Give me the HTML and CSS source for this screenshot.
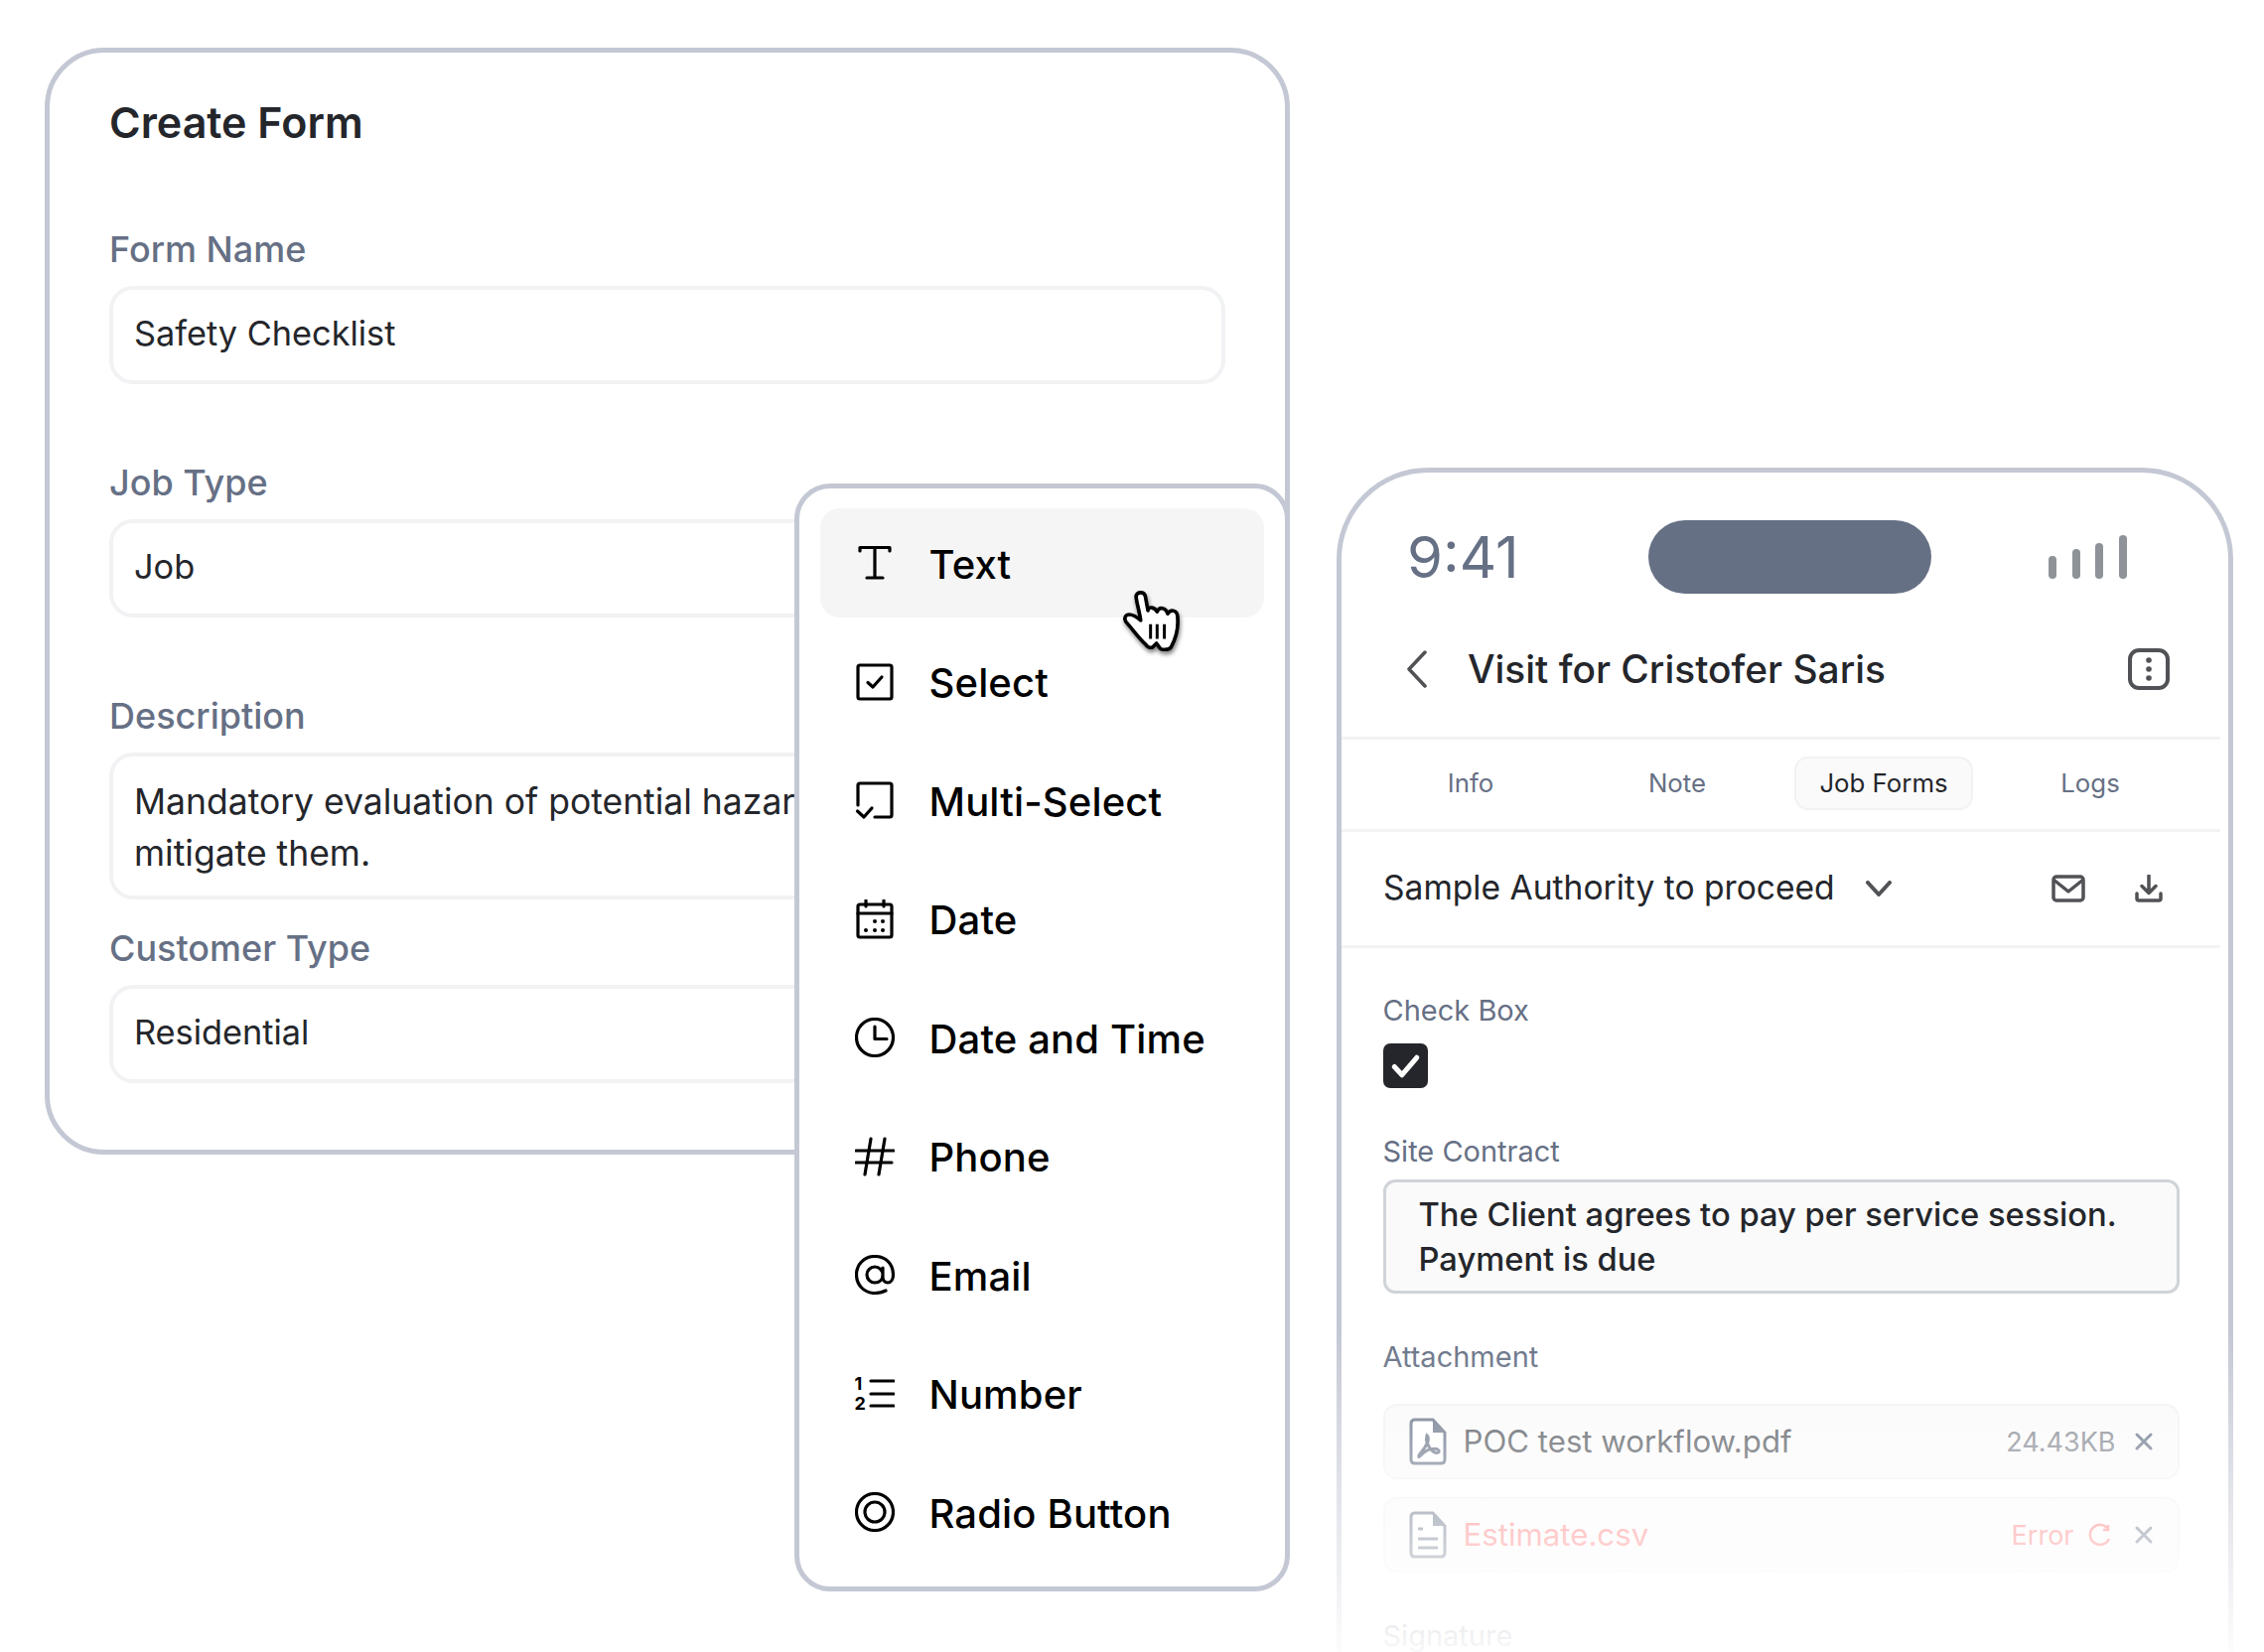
FILE: index.html
```html
<!DOCTYPE html>
<html lang="en">
<head>
<meta charset="utf-8">
<title>Create Form</title>
<link rel="stylesheet" href="styles.css">
</head>
<body>
<main class="canvas">
  <section class="form-card">
    <h1 class="form-title">Create Form</h1>
    <div class="field">
      <div class="field-label">Form Name</div>
      <div class="input">Safety Checklist</div>
    </div>
    <div class="field">
      <div class="field-label">Job Type</div>
      <div class="input">Job</div>
    </div>
    <div class="field field-tall">
      <div class="field-label">Description</div>
      <div class="input input-tall">Mandatory evaluation of potential hazards and how to<br>mitigate them.</div>
    </div>
    <div class="field field-last">
      <div class="field-label">Customer Type</div>
      <div class="input">Residential</div>
    </div>
  </section>

  <section class="menu">
    <div class="menu-item menu-item-active">
      <svg class="menu-icon" viewBox="0 0 40 40"><path d="M5 8V4.500H35V8M20 4.500V35M12 35H28"/></svg>
      <span>Text</span>
    </div>
    <div class="menu-item">
      <svg class="menu-icon" viewBox="0 0 40 40"><rect x="3" y="3" width="34" height="34" rx="2"/><path d="M13 20.500L18 25L27 15"/></svg>
      <span>Select</span>
    </div>
    <div class="menu-item">
      <svg class="menu-icon" viewBox="0 0 40 40"><path d="M3 25V5Q3 3 5 3H35Q37 3 37 5V35Q37 37 35 37H20M2.500 31L9 37L17 28"/></svg>
      <span>Multi-Select</span>
    </div>
    <div class="menu-item">
      <svg class="menu-icon" viewBox="0 0 40 40"><rect x="3" y="5" width="34" height="33" rx="2"/><path d="M3 14H37M11 1V7M29 1V7"/><g class="icon-dots"><circle cx="20" cy="22" r="2"/><circle cx="28" cy="22" r="2"/><circle cx="11" cy="31" r="2"/><circle cx="20" cy="31" r="2"/><circle cx="28" cy="31" r="2"/></g></svg>
      <span>Date</span>
    </div>
    <div class="menu-item">
      <svg class="menu-icon" viewBox="0 0 40 40"><circle cx="20" cy="20" r="18.500"/><path d="M20 9V21.500H32"/></svg>
      <span>Date and Time</span>
    </div>
    <div class="menu-item">
      <svg class="menu-icon" viewBox="0 0 40 40"><path d="M1 14H39M1 26H37M16 2L10 38M30 2L24 38"/></svg>
      <span>Phone</span>
    </div>
    <div class="menu-item">
      <svg class="menu-icon" viewBox="0 0 40 40"><path d="M31 36Q26 38.500 20 38.500C9 38.500 1.500 30 1.500 20S9 1.500 20 1.500S38.500 9 38.500 20C38.500 25 36 28 33 28S28 25.500 28 22V13M28 20C28 25 24.500 28 20 28S12 24.500 12 20S15.500 12 20 12S28 15.500 28 20Z"/></svg>
      <span>Email</span>
    </div>
    <div class="menu-item">
      <div class="num-icon">
        <div class="num-digits"><b>1</b><b>2</b></div>
        <svg class="num-lines" viewBox="0 0 26 40"><path d="M2 7H25M2 20H25M2 32H25"/></svg>
      </div>
      <span>Number</span>
    </div>
    <div class="menu-item">
      <svg class="menu-icon" viewBox="0 0 40 40"><circle cx="20" cy="20" r="18.500"/><circle cx="20" cy="20" r="10"/></svg>
      <span>Radio Button</span>
    </div>
  </section>

  <svg class="cursor" viewBox="120 70 180 190">
    <path class="cursor-hand" d="M190 92C186 78 166 78 162 92C162 108 172 136 176 166C164 156 146 144 134 150C124 156 128 170 136 176C152 194 172 222 192 240C196 248 206 250 212 248L224 236L234 250C238 256 262 258 268 248C280 226 292 196 288 156C288 136 268 130 258 146C252 126 232 124 226 140C218 124 200 124 198 136Z"/>
    <path class="cursor-lines" d="M206 178V222M226 178V222M248 178V222"/>
  </svg>

  <section class="phone">
    <div class="status">
      <div class="clock">9:41</div>
      <div class="island"></div>
      <div class="signal"><i class="bar bar-1"></i><i class="bar bar-2"></i><i class="bar bar-3"></i><i class="bar bar-4"></i></div>
    </div>
    <header class="visit">
      <svg class="visit-back" viewBox="0 0 22 38"><path d="M19 2L3 19L19 36"/></svg>
      <div class="visit-title">Visit for Cristofer Saris</div>
      <svg class="visit-more" viewBox="0 0 42 42"><rect x="2" y="2" width="38" height="38" rx="9"/><circle cx="21" cy="12" r="2.800"/><circle cx="21" cy="21" r="2.800"/><circle cx="21" cy="30" r="2.800"/></svg>
    </header>
    <nav class="tabs">
      <div class="tab">Info</div>
      <div class="tab">Note</div>
      <div class="tab tab-active">Job Forms</div>
      <div class="tab">Logs</div>
    </nav>
    <div class="doc">
      <div class="doc-name">Sample Authority to proceed</div>
      <svg class="doc-chevron" viewBox="0 0 26 16"><path d="M2 2L13 14L24 2"/></svg>
      <svg class="doc-mail" viewBox="0 0 34 28"><rect x="2" y="2" width="30" height="24" rx="3"/><path d="M2 5L17 17L32 5"/></svg>
      <svg class="doc-download" viewBox="0 0 28 28"><path d="M14 1V18M7 11.500L14 18.500L21 11.500M2 19V24Q2 26 4 26H24Q26 26 26 24V19"/></svg>
    </div>
    <div class="body">
      <div class="body-label">Check Box</div>
      <div class="check"><svg class="check-mark" viewBox="0 0 44 44"><path d="M11 23L18.500 31L33 14"/></svg></div>
      <div class="body-label body-label-gap">Site Contract</div>
      <div class="contract">The Client agrees to pay per service session.<br>Payment is due</div>
      <div class="body-label body-label-attach">Attachment</div>
      <div class="file">
        <svg class="file-icon" viewBox="0 0 38 48"><path class="file-page" d="M24 2H6Q2 2 2 6V42Q2 46 6 46H32Q36 46 36 42V15Z"/><path class="file-fold" d="M24 2L36 15H24Z"/><path class="file-pdf" d="M18 18C16 24 20 30 24 34C27 36 31 36 30 33C28 30 20 31 15 35C11 39 9 41 10 38C12 34 21 27 19 19Z"/></svg>
        <div class="file-name">POC test workflow.pdf</div>
        <div class="file-size">24.43KB</div>
        <svg class="file-close" viewBox="0 0 20 20"><path d="M3 3L17 17M17 3L3 17"/></svg>
      </div>
      <div class="file file-error">
        <svg class="file-icon" viewBox="0 0 38 48"><path class="file-page" d="M24 2H6Q2 2 2 6V42Q2 46 6 46H32Q36 46 36 42V15Z"/><path class="file-fold" d="M24 2L36 15H24Z"/><path class="file-pdf" d="M9 18H14M9 28H29M9 37H29"/></svg>
        <div class="file-name">Estimate.csv</div>
        <div class="file-size">Error</div>
        <svg class="file-retry" viewBox="0 0 24 24"><path d="M20 6A10 10 0 1 0 21 16M20 2V7H15"/></svg>
        <svg class="file-close" viewBox="0 0 20 20"><path d="M3 3L17 17M17 3L3 17"/></svg>
      </div>
      <div class="body-label body-label-sign">Signature</div>
    </div>
  </section>
  <div class="phone-fade"></div>
</main>
</body>
</html>
```

FILE: styles.css
```css
* { box-sizing: border-box; }
html, body { margin: 0; padding: 0; background: #fff; }
body { font-family: Inter, "Noto Sans", sans-serif; color: #24262b; }
svg { display: block; flex: none; }

.canvas { position: relative; width: 2280px; height: 1664px; overflow: hidden; background: #fff; }

/* Create Form card */
.form-card {
  position: absolute; left: 45px; top: 48px; width: 1254px; height: 1115px;
  padding: 44px 60px 0;
  border: 5px solid #c4c8d4; border-radius: 60px; background: #fff;
}
.form-title { margin: 0 0 80px; font-size: 43px; line-height: 52px; font-weight: 600; color: #24262b; }
.field { margin-bottom: 77px; }
.field-tall { margin-bottom: 27px; }
.field-last { margin-bottom: 0; }
.field-label { height: 44px; margin-bottom: 15px; font-size: 36px; line-height: 44px; color: #667085; font-weight: 500; }
.input {
  height: 99px; padding: 0 21px;
  border: 4px solid #f1f2f4; border-radius: 24px;
  font-size: 34.300px; line-height: 87px; color: #24262b;
}
.input-tall { height: 148px; padding-top: 20px; font-size: 35.500px; line-height: 52px; }

/* Field type menu */
.menu {
  position: absolute; left: 800px; top: 487px; width: 499px; height: 1116px;
  padding: 20px 21px 0;
  display: flex; flex-direction: column; gap: 9.500px;
  border: 5px solid #c4c8d4; border-radius: 36px; background: #fff;
}
.menu-item {
  display: flex; align-items: center; gap: 35px; flex: none;
  height: 110px; padding-left: 34.500px; border-radius: 20px;
  font-size: 40px; font-weight: 500; letter-spacing: .15px; color: #000;
}
.menu-item span { position: relative; top: 1px; }
.menu-item-active { background: #f5f5f5; }
.menu-icon { width: 40px; height: 40px; fill: none; stroke: #000; stroke-width: 3.200; stroke-linecap: round; stroke-linejoin: round; }
.icon-dots { fill: #000; stroke: none; }
.num-icon { display: flex; flex: none; width: 40px; height: 40px; }
.num-digits { display: flex; flex-direction: column; width: 14px; font-size: 18px; line-height: 20px; letter-spacing: 0; }
.num-digits b { display: block; height: 20px; font-weight: 700; }
.num-lines { width: 26px; height: 40px; fill: none; stroke: #000; stroke-width: 3.200; stroke-linecap: round; }

.cursor { position: absolute; left: 1130px; top: 593px; width: 60px; height: 63px; filter: drop-shadow(1px 3px 2px rgba(0,0,0,.5)); }
.cursor-hand { fill: #fff; stroke: #000; stroke-width: 11; stroke-linejoin: round; }
.cursor-lines { fill: none; stroke: #000; stroke-width: 9; }

/* Phone */
.phone {
  position: absolute; left: 1346px; top: 471px; width: 903px; height: 1300px;
  padding-top: 48px;
  border: 5px solid #c4c8d4; border-radius: 92px; background: #fff;
}
.status { display: flex; align-items: center; height: 74px; padding-left: 66px; }
.clock { width: 243px; font-size: 58px; line-height: 74px; color: #667085; font-weight: 400; }
.island { width: 285px; height: 74px; border-radius: 37px; background: #667085; }
.signal { display: flex; align-items: flex-end; gap: 15.500px; margin-left: 118px; height: 44px; }
.bar { display: block; width: 8px; border-radius: 4px; background: #8e9299; }
.bar-1 { height: 23px; }
.bar-2 { height: 30px; }
.bar-3 { height: 36px; }
.bar-4 { height: 44px; }

.visit {
  display: flex; align-items: center; width: 885px; height: 93px;
  margin-top: 54px; padding: 0 0 46px 65px;
  border-bottom: 3px solid #f2f3f5;
}
.visit-back { width: 22px; height: 38px; fill: none; stroke: #505256; stroke-width: 3.500; stroke-linecap: round; stroke-linejoin: round; }
.visit-title { margin-left: 40px; font-size: 38.900px; line-height: 46px; font-weight: 500; color: #24262b; }
.visit-more { width: 42px; height: 42px; margin-left: auto; margin-right: 51px; fill: none; stroke: #505256; stroke-width: 4; }
.visit-more circle { fill: #505256; stroke: none; }

.tabs {
  display: grid; grid-template-columns: repeat(4, 208px); justify-items: center; align-items: center;
  width: 885px; height: 93px; padding-left: 26px; padding-bottom: 2px;
  border-bottom: 3px solid #f2f3f5;
  font-size: 25.800px; color: #667085;
}
.tab { line-height: 54px; }
.tab-active { width: 180px; height: 54px; line-height: 50px; text-align: center; border: 2px solid #f1f2f4; border-radius: 14px; background: #fafafa; color: #24262b; }

.doc {
  display: flex; align-items: center; width: 885px; height: 117px; padding-left: 42px;
  border-bottom: 3px solid #f2f3f5;
}
.doc-name { font-size: 33.600px; line-height: 44px; color: #24262b; position: relative; top: -1px; }
.doc-chevron { width: 28px; height: 16px; margin-left: 30px; fill: none; stroke: #505256; stroke-width: 4; stroke-linecap: round; stroke-linejoin: round; }
.doc-mail { width: 34px; height: 28px; margin-left: 160px; fill: none; stroke: #505256; stroke-width: 3.500; stroke-linejoin: round; }
.doc-download { width: 28px; height: 28px; margin-left: 50px; fill: none; stroke: #505256; stroke-width: 3.500; stroke-linecap: round; stroke-linejoin: round; }

.body { width: 885px; padding: 43px 0 0 41.500px; }
.body-label { height: 40px; font-size: 29px; line-height: 40px; color: #667085; }
.body-label-gap { margin-top: 44px; margin-bottom: 8px; }
.body-label-attach { margin-top: 44px; margin-bottom: 27px; }
.body-label-sign { margin-top: 44px; }
.check { width: 45px; height: 45px; margin-top: 13px; border-radius: 7px; background: #24262b; }
.check-mark { width: 45px; height: 45px; fill: none; stroke: #fff; stroke-width: 5; stroke-linecap: round; stroke-linejoin: round; }
.contract {
  width: 802px; height: 115px; padding: 10px 0 0 33px;
  border: 3px solid #d0d3d9; border-radius: 12px; background: #fafafa;
  font-size: 32.700px; line-height: 45px; font-weight: 500; color: #24262b;
}
.file {
  display: flex; align-items: center; width: 802px; height: 76px; margin-bottom: 18px; padding: 0 24px 0 24px;
  border: 2px solid #f1f2f4; border-radius: 14px; background: #fafafa;
}
.file-icon { width: 38px; height: 48px; margin-right: 17px; }
.file-page { fill: #fff; stroke: #667085; stroke-width: 3; }
.file-fold { fill: #667085; stroke: none; }
.file-pdf { fill: none; stroke: #667085; stroke-width: 3; }
.file-name { font-size: 31.200px; color: #4e5259; }
.file-size { margin-left: auto; font-size: 27px; color: #7f838c; }
.file-close { width: 20px; height: 20px; margin-left: 18px; fill: none; stroke: #667085; stroke-width: 3; stroke-linecap: round; }
.file-error .file-name, .file-error .file-size { color: #f77; }
.file-retry { width: 24px; height: 24px; margin-left: 14px; fill: none; stroke: #f77; stroke-width: 2.500; }
.file-error .file-close { margin-left: 22px; }

.phone-fade {
  position: absolute; left: 1311px; right: 0; top: 1340px; bottom: 0;
  background: linear-gradient(to bottom, rgba(255,255,255,0), rgba(255,255,255,.5) 50%, rgba(255,255,255,.95) 100%);
}
```
